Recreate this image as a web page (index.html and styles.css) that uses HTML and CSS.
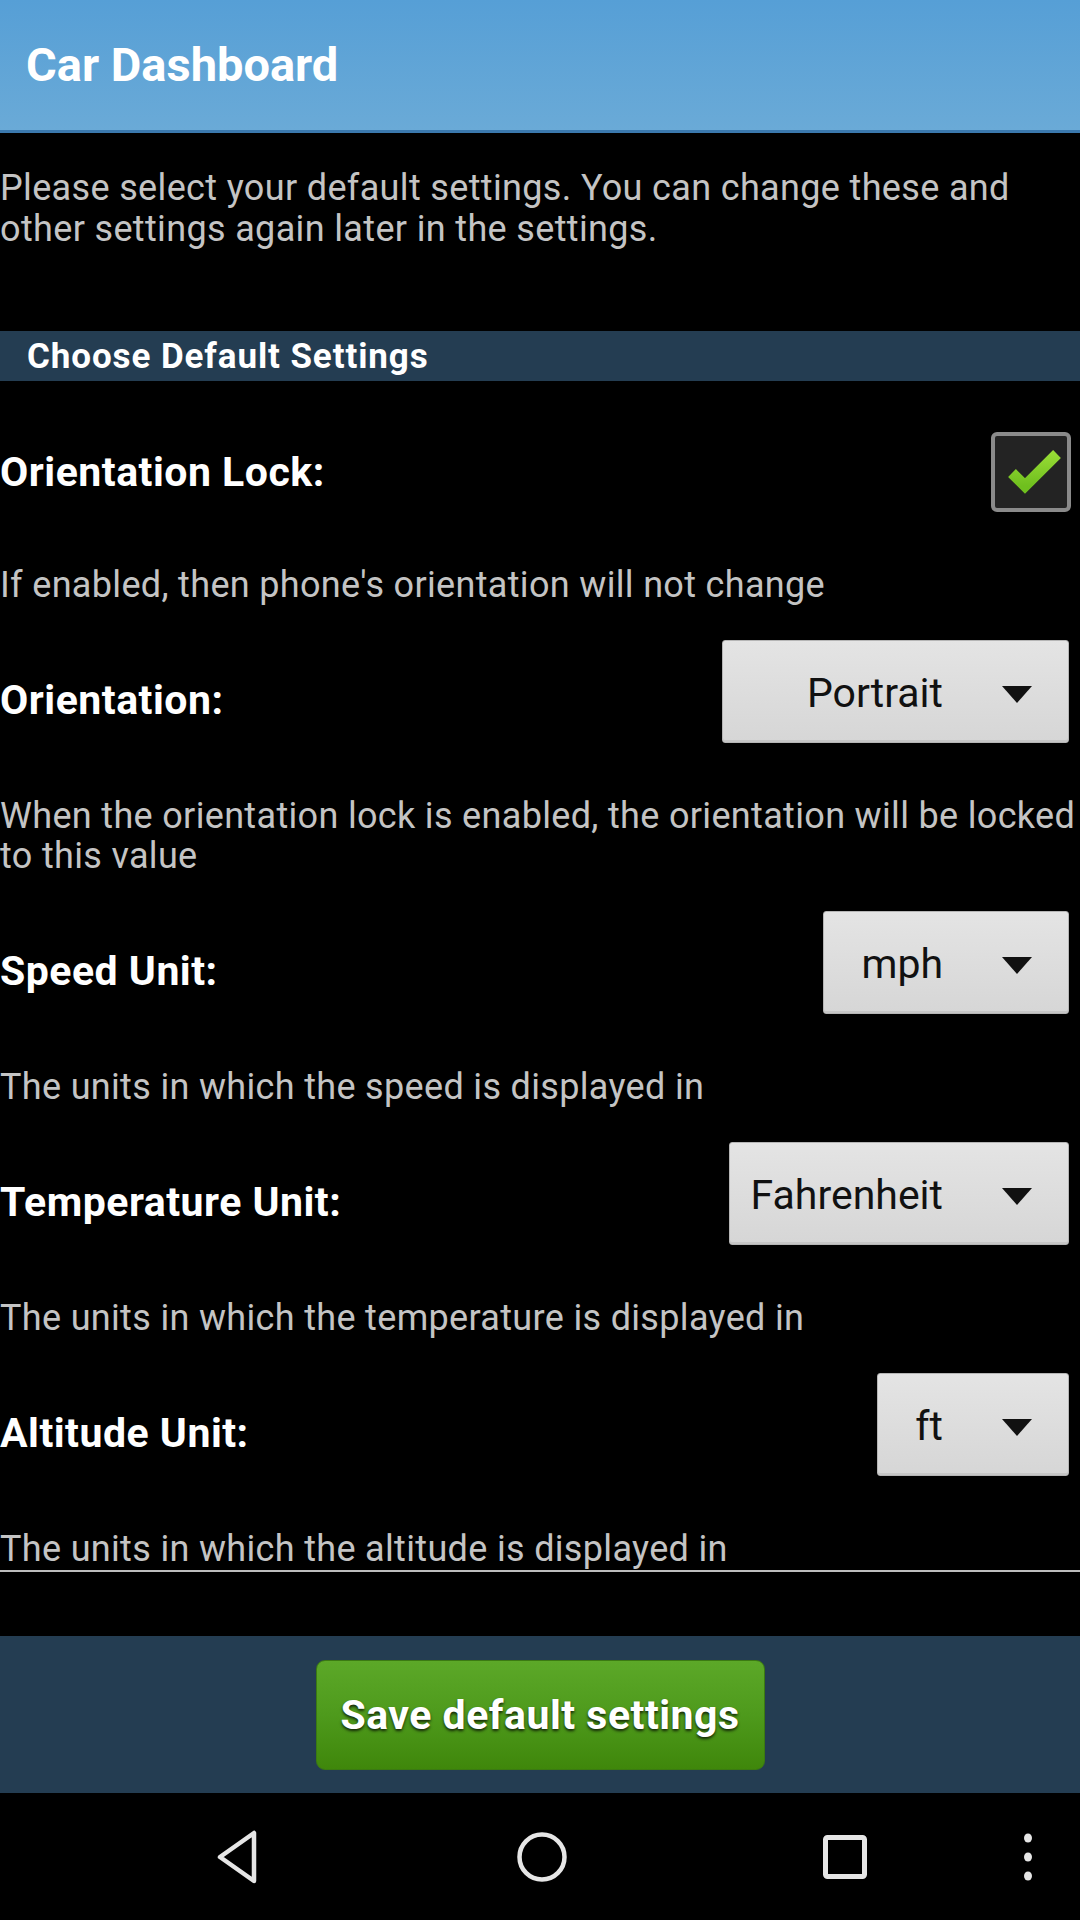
FILE: index.html
```html
<!DOCTYPE html>
<html lang="en">
<head>
<meta charset="utf-8">
<title>Car Dashboard</title>
<link rel="stylesheet" href="styles.css">
</head>
<body>
<div class="screen">
  <header class="appbar">
    <h1 class="appbar-title">Car Dashboard</h1>
  </header>

  <main class="content">
    <p class="intro">Please select your default settings. You can change these and<br>other settings again later in the settings.</p>

    <div class="section-bar">Choose Default Settings</div>

    <section class="setting">
      <div class="row">
        <span class="label">Orientation Lock:</span>
        <span class="checkbox">
          <svg viewBox="0 0 72 72" width="72" height="72" aria-hidden="true">
            <defs>
              <linearGradient id="chk" x1="0" y1="0" x2="0" y2="1">
                <stop offset="0" stop-color="#97dc35"/>
                <stop offset="1" stop-color="#6fbf1e"/>
              </linearGradient>
            </defs>
            <polyline points="17,37 30,50 62,18" fill="none" stroke="url(#chk)" stroke-width="11" stroke-linejoin="miter"/>
          </svg>
        </span>
      </div>
      <p class="desc">If enabled, then phone's orientation will not change</p>
    </section>

    <section class="setting">
      <div class="row">
        <span class="label">Orientation:</span>
        <span class="spinner spinner-orientation"><span class="spinner-value">Portrait</span><span class="caret"></span></span>
      </div>
      <p class="desc">When the orientation lock is enabled, the orientation will be locked<br>to this value</p>
    </section>

    <section class="setting">
      <div class="row">
        <span class="label">Speed Unit:</span>
        <span class="spinner spinner-speed"><span class="spinner-value">mph</span><span class="caret"></span></span>
      </div>
      <p class="desc">The units in which the speed is displayed in</p>
    </section>

    <section class="setting">
      <div class="row">
        <span class="label">Temperature Unit:</span>
        <span class="spinner spinner-temp"><span class="spinner-value">Fahrenheit</span><span class="caret"></span></span>
      </div>
      <p class="desc">The units in which the temperature is displayed in</p>
    </section>

    <section class="setting">
      <div class="row">
        <span class="label">Altitude Unit:</span>
        <span class="spinner spinner-alt"><span class="spinner-value">ft</span><span class="caret"></span></span>
      </div>
      <p class="desc">The units in which the altitude is displayed in</p>
    </section>

    <div class="divider"></div>
  </main>

  <footer class="action-bar">
    <button class="save-btn" type="button">Save default settings</button>
  </footer>

  <nav class="navbar">
    <span class="nav-btn">
      <svg width="50" height="56" viewBox="0 0 50 56" aria-hidden="true">
        <path d="M40 4 L40 52 L6 28 Z" fill="none" stroke="#e6e6e6" stroke-width="4.5" stroke-linejoin="round"/>
      </svg>
    </span>
    <span class="nav-btn">
      <svg width="56" height="56" viewBox="0 0 56 56" aria-hidden="true">
        <circle cx="28" cy="28" r="22.5" fill="none" stroke="#e6e6e6" stroke-width="4.5"/>
      </svg>
    </span>
    <span class="nav-btn">
      <svg width="50" height="50" viewBox="0 0 50 50" aria-hidden="true">
        <rect x="5.5" y="5.5" width="39" height="39" rx="2" fill="none" stroke="#e6e6e6" stroke-width="5"/>
      </svg>
    </span>
    <span class="nav-btn nav-menu">
      <svg width="12" height="50" viewBox="0 0 12 50" aria-hidden="true">
        <ellipse cx="6" cy="6" rx="4" ry="4.5" fill="#e6e6e6"/>
        <ellipse cx="6" cy="25" rx="4" ry="4.5" fill="#e6e6e6"/>
        <ellipse cx="6" cy="44" rx="4" ry="4.5" fill="#e6e6e6"/>
      </svg>
    </span>
  </nav>
</div>
</body>
</html>
```

FILE: styles.css
```css
* {
  box-sizing: border-box;
}

html, body {
  margin: 0;
  padding: 0;
  background: #000;
}

body {
  font-family: Roboto, "Liberation Sans", Arial, sans-serif;
  color: #fff;
}

.screen {
  width: 1080px;
  height: 1920px;
  display: flex;
  flex-direction: column;
  background: #000;
  overflow: hidden;
}

/* ---------- App bar ---------- */
.appbar {
  height: 133px;
  flex: 0 0 auto;
  background: linear-gradient(to bottom, #569fd6 0%, #6aaad7 100%);
  border-bottom: 3px solid #3b79ae;
  display: flex;
  align-items: center;
  padding-left: 26px;
}

.appbar-title {
  margin: 0;
  font-size: 47px;
  font-weight: 700;
  color: #fff;
  line-height: 1;
  padding-bottom: 2px;
}

/* ---------- Content ---------- */
.content {
  flex: 1 1 auto;
  display: flex;
  flex-direction: column;
}

.intro {
  margin: 35px 0 81px 0;
  font-size: 36px;
  letter-spacing: 0.35px;
  line-height: 41px;
  color: #c4c4c4;
  white-space: nowrap;
}

.section-bar {
  height: 50px;
  background: #243d52;
  display: flex;
  align-items: center;
  padding-left: 27px;
  font-size: 35px;
  letter-spacing: 0.9px;
  font-weight: 700;
  color: #fff;
}

.setting {
  padding-top: 35px;
}

.row {
  display: flex;
  align-items: center;
  justify-content: space-between;
}

.label {
  font-size: 41px;
  letter-spacing: 0.5px;
  font-weight: 700;
  color: #fff;
}

.desc {
  margin: 37px 0 0 0;
  font-size: 36px;
  letter-spacing: 0.33px;
  line-height: 40px;
  color: #c4c4c4;
  white-space: nowrap;
}

/* ---------- Checkbox ---------- */
.checkbox {
  width: 80px;
  height: 80px;
  margin: 16px 9px 16px 0;
  border: 4px solid #8a8a8a;
  border-radius: 6px;
  background: #232323;
  display: flex;
  align-items: center;
  justify-content: center;
}

/* ---------- Spinner ---------- */
.spinner {
  height: 103px;
  margin: 0 11px 16px 0;
  display: flex;
  align-items: center;
  justify-content: flex-end;
  padding-right: 36px;
  background: linear-gradient(to bottom, #e4e4e4 0%, #d6d6d6 100%);
  border: 1px solid #b5b5b5;
  border-radius: 3px;
  box-shadow: inset 0 -2px 0 #c6c6c6;
}

.spinner-orientation { width: 347px; }
.spinner-speed { width: 246px; }
.spinner-temp { width: 340px; }
.spinner-alt { width: 192px; }

.spinner-value {
  font-size: 41px;
  color: #111;
  margin-right: 59px;
  padding-top: 2px;
}

.caret {
  width: 0;
  height: 0;
  border-left: 15.5px solid transparent;
  border-right: 15.5px solid transparent;
  border-top: 17px solid #111;
  margin-top: 6px;
}

.divider {
  margin-top: 1px;
  height: 2px;
  background: #bdbdbd;
}

/* ---------- Action bar ---------- */
.action-bar {
  height: 157px;
  flex: 0 0 auto;
  background: #243d52;
  display: flex;
  align-items: center;
  justify-content: center;
}

.save-btn {
  width: 449px;
  height: 110px;
  border: 1px solid #3b7a12;
  border-radius: 9px;
  background: linear-gradient(to bottom, #5ca828 0%, #4e9a1c 50%, #3f870b 100%);
  color: #fff;
  font-family: Roboto, "Liberation Sans", Arial, sans-serif;
  font-size: 41px;
  letter-spacing: 0.5px;
  font-weight: 700;
  text-shadow: 0 2px 3px rgba(0, 0, 0, 0.75);
  padding: 0;
  cursor: pointer;
}

/* ---------- Nav bar ---------- */
.navbar {
  height: 127px;
  flex: 0 0 auto;
  background: #000;
  display: flex;
  align-items: center;
  padding-left: 87px;
}

.nav-btn {
  width: 303px;
  height: 127px;
  display: flex;
  align-items: center;
  justify-content: center;
}

.nav-menu {
  width: 64px;
}
```
